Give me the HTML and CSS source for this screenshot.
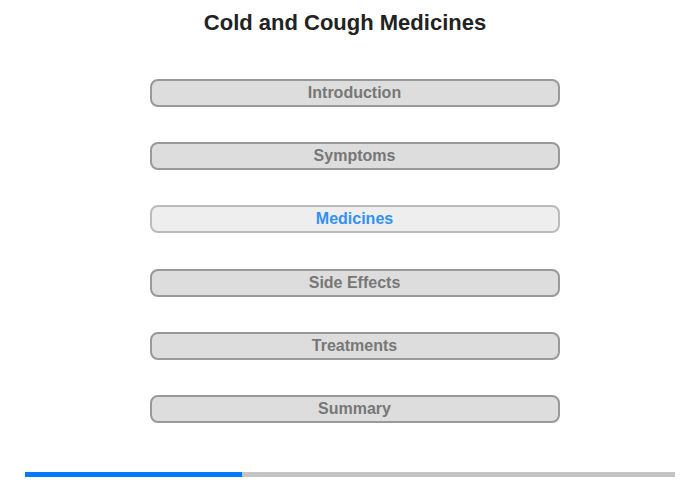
FILE: index.html
```html
<!DOCTYPE html>
<html lang="en">
<head>
  <meta charset="UTF-8">
  <meta name="viewport" content="width=device-width, initial-scale=1.0">
  <title>Cold and Cough Medicines</title>
  <link rel="stylesheet" href="styles.css">
</head>
<body>

<h1 class="title">Cold and Cough Medicines</h1>

<nav class="menu">
  <a class="menu-btn" href="#">Introduction</a>
  <a class="menu-btn" href="#">Symptoms</a>
  <a class="menu-btn current" href="#">Medicines</a>
  <a class="menu-btn" href="#">Side Effects</a>
  <a class="menu-btn" href="#">Treatments</a>
  <a class="menu-btn" href="#">Summary</a>
</nav>

<!-- progress -->
<div class="progress">
  <div class="progress-fill" style="width: 33.4%"></div>
</div>

</body>
</html>
```

FILE: styles.css
```css
body {
  font-family: 'Liberation Sans', Arial, sans-serif;
  margin: 0;
  width: 700px;
  height: 480px;
  background: white;
  color: #222;
}
.title {
  font-size: 22px;
  font-weight: bold;
  text-align: center;
  margin: 0;
  padding-top: 11px;
  padding-right: 10px;
  line-height: 24px;
  color: #222;
}
.menu {
  display: flex;
  flex-direction: column;
  align-items: center;
  gap: 35.2px;
  margin-top: 44px;
  padding-left: 9px;
}
.menu-btn {
  display: block;
  box-sizing: border-box;
  width: 410px;
  height: 28px;
  line-height: 24px;
  text-align: center;
  background: #dddddd;
  border: 2px solid #999;
  border-radius: 8px;
  color: #777;
  font-size: 16px;
  font-weight: bold;
  text-decoration: none;
}
.menu-btn.current {
  background: #eeeeee;
  border-color: #bbb;
  color: #3390f4;
}
.progress {
  margin: 49px 25px 0;
  height: 5px;
  background: #c4c4c4;
}
.progress-fill {
  height: 100%;
  background: #007bff;
}
```
